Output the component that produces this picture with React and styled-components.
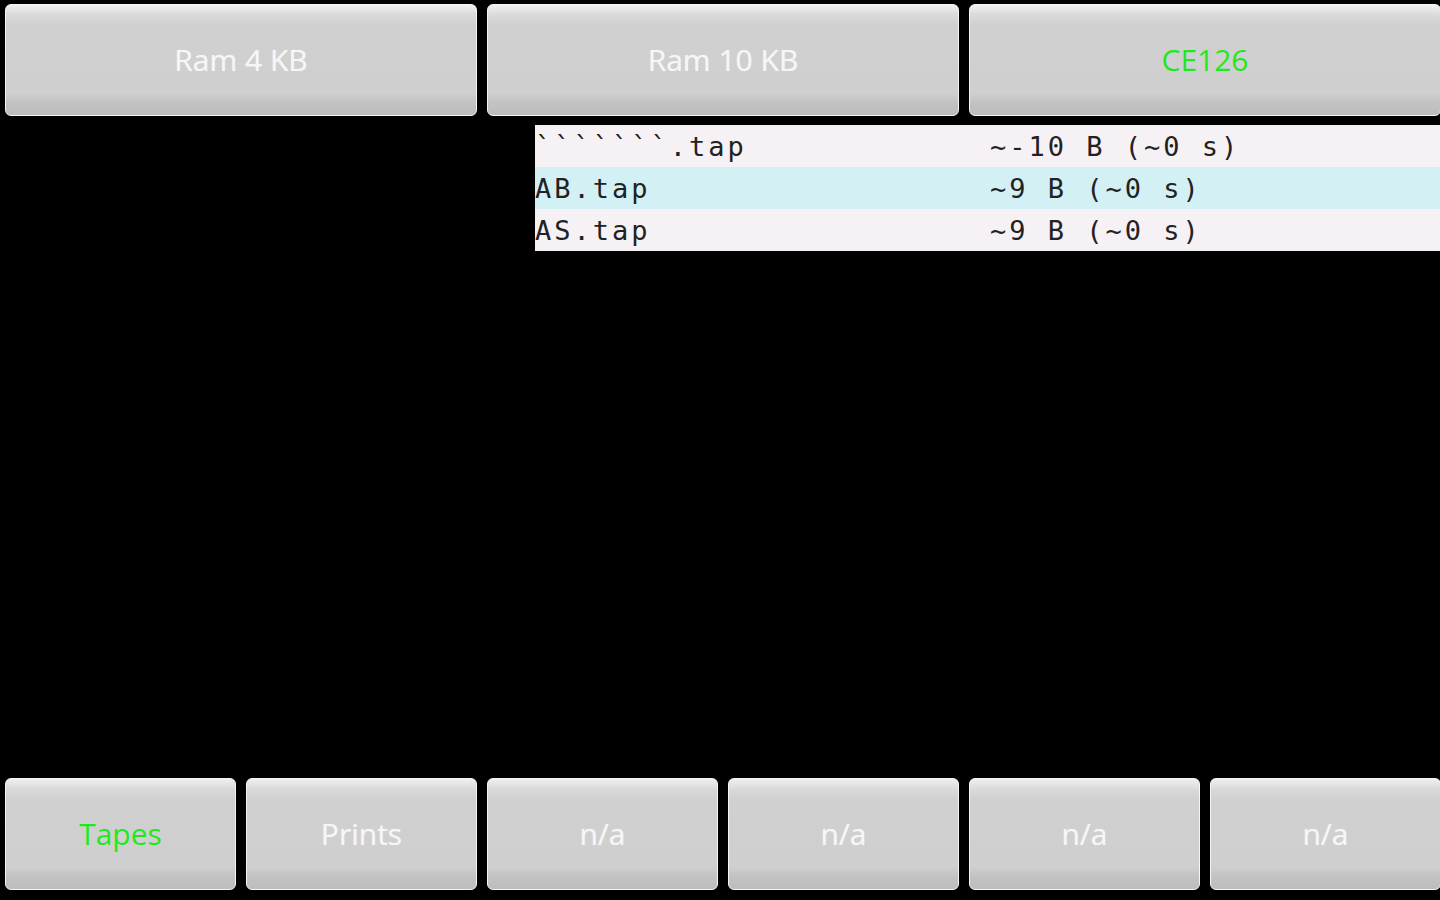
import React from 'react';
import styled, { createGlobalStyle } from 'styled-components';

const Global = createGlobalStyle`
  html, body {
    margin: 0;
    padding: 0;
    background: #000;
  }
`;

const Screen = styled.div`
  width: 1440px;
  height: 900px;
  background: #000;
  display: flex;
  flex-direction: column;
  overflow: hidden;
`;

const Bar = styled.div`
  display: flex;
  gap: 10px;
  padding: ${(p) => (p.bottom ? '0 0 10px 5px' : '4px 0 0 5px')};
  margin-top: ${(p) => (p.bottom ? 'auto' : '0')};
`;

const Button = styled.div`
  flex: 0 0 ${(p) => p.w}px;
  height: 112px;
  box-sizing: border-box;
  border: 1px solid #f4f4f4;
  border-radius: 6px;
  background: linear-gradient(
    #f0f0f0 0px,
    #dadada 10px,
    #d0d0d0 20px,
    #cfcfcf 80%,
    #c3c3c3 88%,
    #bdbdbd 100%
  );
  display: flex;
  align-items: center;
  justify-content: center;
  padding-bottom: 2px;
  font-family: 'Open Sans', 'DejaVu Sans', sans-serif;
  font-size: 30px;
  color: ${(p) => (p.active ? '#1fe81f' : '#f6f6f6')};
  text-shadow: ${(p) => (p.active ? 'none' : '0 0 1px rgba(255,255,255,0.6)')};
`;

const List = styled.div`
  margin: 9px 0 0 535px;
  display: flex;
  flex-direction: column;
`;

const Row = styled.div`
  height: 42px;
  display: grid;
  grid-template-columns: 455px 1fr;
  align-items: center;
  background: ${(p) => (p.selected ? '#d3f1f5' : '#f6f1f5')};
  font-family: 'DejaVu Sans Mono', monospace;
  font-size: 27px;
  letter-spacing: 3px;
  color: #222;
  white-space: pre;
`;

const files = [
  { name: '```````.tap', size: '~-10 B (~0 s)' },
  { name: 'AB.tap', size: '~9 B (~0 s)', selected: true },
  { name: 'AS.tap', size: '~9 B (~0 s)' },
];

const top = [
  { label: 'Ram 4 KB' },
  { label: 'Ram 10 KB' },
  { label: 'CE126', active: true },
];

const bottom = [
  { label: 'Tapes', active: true },
  { label: 'Prints' },
  { label: 'n/a' },
  { label: 'n/a' },
  { label: 'n/a' },
  { label: 'n/a' },
];

export default function App() {
  return (
    <Screen>
      <Global />
      <Bar>
        {top.map((b, i) => (
          <Button key={i} w={472} active={b.active}>
            {b.label}
          </Button>
        ))}
      </Bar>
      <List>
        {files.map((f, i) => (
          <Row key={i} selected={f.selected}>
            <span>{f.name}</span>
            <span>{f.size}</span>
          </Row>
        ))}
      </List>
      <Bar bottom>
        {bottom.map((b, i) => (
          <Button key={i} w={231} active={b.active}>
            {b.label}
          </Button>
        ))}
      </Bar>
    </Screen>
  );
}
